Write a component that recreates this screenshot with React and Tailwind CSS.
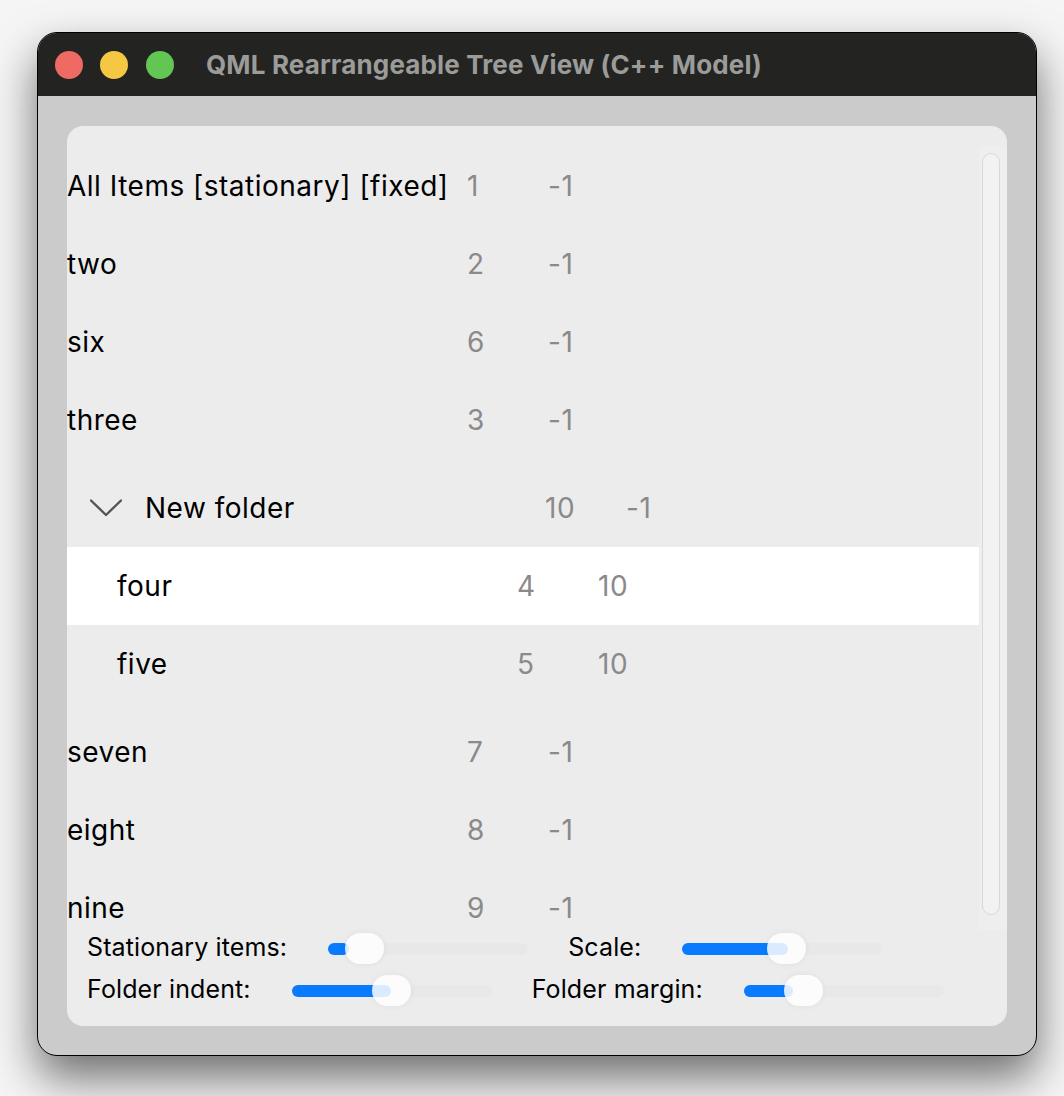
import React from "react";

const rows = [
  { type: "item", name: "All Items [stationary] [fixed]", a: "1", b: "-1" },
  { type: "item", name: "two", a: "2", b: "-1" },
  { type: "item", name: "six", a: "6", b: "-1" },
  { type: "item", name: "three", a: "3", b: "-1" },
];
const rows2 = [
  { name: "seven", a: "7", b: "-1" },
  { name: "eight", a: "8", b: "-1" },
  { name: "nine", a: "9", b: "-1" },
];

function Row({ name, a, b, indent = false, highlight = false }) {
  return (
    <div
      className={
        "flex h-[78px] shrink-0 items-center " +
        (indent ? "pl-[50px] " : "") +
        (highlight ? "bg-white" : "")
      }
    >
      <div className="w-[400px] shrink-0 whitespace-nowrap text-black">{name}</div>
      <div className="w-[81px] shrink-0 text-[#8a8a8a]">{a}</div>
      <div className="text-[#8a8a8a]">{b}</div>
    </div>
  );
}

function Slider({ p }) {
  const fill = p * 200;
  const handle = p * 161;
  return (
    <div className="relative ml-[1px] h-[31px] w-[200px] shrink-0">
      <div className="absolute left-0 right-0 top-[10px] h-[12px] rounded-full bg-[#e8e8e8]" />
      <div
        className="absolute left-0 top-[10px] h-[12px] rounded-full bg-[#0a7aff]"
        style={{ width: fill }}
      />
      <div
        className="absolute top-0 h-[31px] w-[39px] rounded-full bg-white/85 shadow-[0_0_6px_rgba(0,0,0,0.06)]"
        style={{ left: handle }}
      />
    </div>
  );
}

export default function App() {
  return (
    <div
      className="h-[1096px] w-[1064px] overflow-hidden bg-[#f5f5f5] pl-[37px] pt-[32px]"
      style={{ fontFamily: "Inter, 'Noto Sans', sans-serif" }}
    >
      <div className="flex h-[1024px] w-[1000px] flex-col overflow-hidden rounded-[20px] border border-black bg-[#cbcbcb] shadow-[0_22px_45px_rgba(0,0,0,0.55)]">
        {/* Title bar */}
        <div className="flex h-[63px] shrink-0 items-center bg-[#232422] pl-[17px]">
          <div className="h-[28px] w-[28px] rounded-full bg-[#ee6a62]" />
          <div className="ml-[17px] h-[28px] w-[28px] rounded-full bg-[#f5c843]" />
          <div className="ml-[18px] h-[28px] w-[28px] rounded-full bg-[#62c554]" />
          <div className="ml-[32px] whitespace-nowrap text-[26px] font-bold tracking-[0.15px] text-[#9b9b9a]">
            QML Rearrangeable Tree View (C++ Model)
          </div>
        </div>
        {/* Content */}
        <div className="pb-[29px] pl-[29px] pr-[29px] pt-[30px]">
          <div className="flex h-[900px] w-[940px] flex-col overflow-hidden rounded-[16px] bg-[#ececec]">
            <div className="flex h-[804px] shrink-0 overflow-hidden">
              <div className="flex w-[912px] shrink-0 flex-col pt-[21px] text-[28px] tracking-[0.5px]">
                {rows.map((r) => (
                  <Row key={r.name} {...r} />
                ))}
                <div className="mt-[10px] flex h-[78px] shrink-0 items-center">
                  <svg
                    className="ml-[23px] shrink-0"
                    width="32"
                    height="18"
                    viewBox="0 0 32 18"
                    fill="none"
                  >
                    <polyline
                      points="1,1.5 16,16 31,1.5"
                      stroke="#555"
                      strokeWidth="2.4"
                      strokeLinecap="round"
                      strokeLinejoin="round"
                    />
                  </svg>
                  <div className="ml-[23px] w-[400px] shrink-0 whitespace-nowrap text-black">
                    New folder
                  </div>
                  <div className="w-[81px] shrink-0 text-[#8a8a8a]">10</div>
                  <div className="text-[#8a8a8a]">-1</div>
                </div>
                <Row name="four" a="4" b="10" indent highlight />
                <Row name="five" a="5" b="10" indent />
                <div className="h-[10px] shrink-0" />
                {rows2.map((r) => (
                  <Row key={r.name} {...r} />
                ))}
              </div>
              <div className="mt-[20px] flex w-[28px] shrink-0 flex-col bg-[#eeeeee] pl-[3px] pt-[7px]">
                <div className="h-[762px] w-[18px] rounded-full border border-[#d9d9d9] bg-[#f2f2f2]" />
              </div>
            </div>
            <div className="flex flex-col gap-[6px] pl-[20px] text-[25px] tracking-[0.12px] text-black">
              <div className="flex h-[36px] items-center gap-[40px]">
                <span className="whitespace-nowrap">Stationary items:</span>
                <Slider p={0.106} />
                <span className="whitespace-nowrap">Scale:</span>
                <Slider p={0.528} />
              </div>
              <div className="flex h-[36px] items-center gap-[40px]">
                <span className="whitespace-nowrap">Folder indent:</span>
                <Slider p={0.497} />
                <span className="whitespace-nowrap">Folder margin:</span>
                <Slider p={0.248} />
              </div>
            </div>
          </div>
        </div>
      </div>
    </div>
  );
}
